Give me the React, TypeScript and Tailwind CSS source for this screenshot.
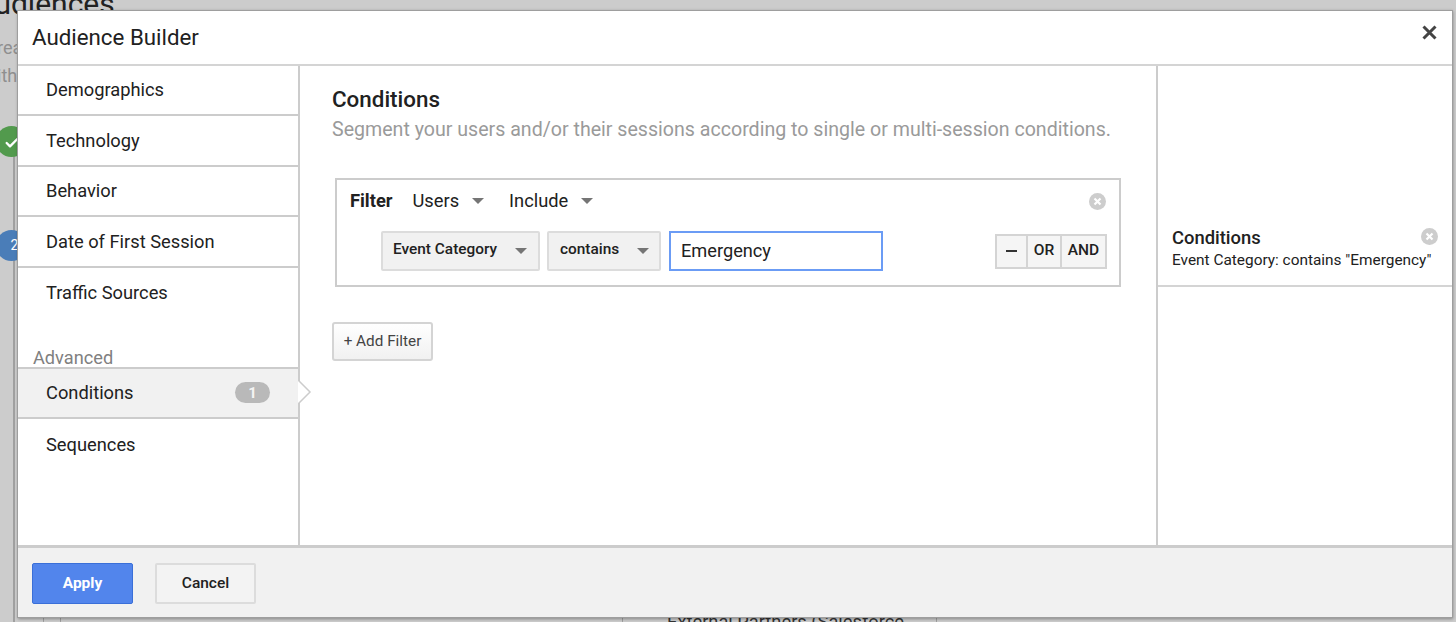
import React from 'react';
import { Check } from 'lucide-react';

const navItems = ['Demographics', 'Technology', 'Behavior', 'Date of First Session', 'Traffic Sources'];

const Caret = () => (
  <svg width="12" height="6" viewBox="0 0 12 6" className="shrink-0">
    <path d="M0 0h12L6 6z" fill="#757575" />
  </svg>
);

const CircleX = () => (
  <svg width="17" height="17" viewBox="0 0 17 17" className="shrink-0">
    <circle cx="8.5" cy="8.5" r="8.5" fill="#cdcdcd" />
    <path d="M5.5 5.5l6 6M11.5 5.5l-6 6" stroke="#fff" strokeWidth="2.2" />
  </svg>
);

// greyed page that shows around the dialog
const Backdrop = () => (
  <div className="absolute inset-0 overflow-hidden bg-[#cccccc] text-[#8f8f8f]">
    <div className="absolute left-[-25px] top-[-14px] text-[30px] leading-[36px] text-[#222222]">Audiences</div>
    <div className="absolute left-[-3px] top-[38px] text-[18px] leading-[20px]">rea</div>
    <div className="absolute left-[-3px] top-[66px] text-[18px] leading-[20px]">ith</div>
    <div className="absolute left-[13px] top-[150px] h-[472px] w-[2px] bg-[#a0a0a0]" />
    <div className="absolute left-[43px] top-[618px] h-[4px] w-[1px] bg-[#a0a0a0]" />
    <div className="absolute left-[60px] top-[618px] h-[4px] w-[1px] bg-[#a0a0a0]" />
    <div className="absolute left-[622px] top-[618px] h-[4px] w-[1px] bg-[#a0a0a0]" />
    <div className="absolute left-[936px] top-[618px] h-[4px] w-[1px] bg-[#a0a0a0]" />
    <div className="absolute left-[-4px] top-[126px] flex h-[31px] w-[31px] items-center justify-center rounded-full bg-[#529a4d]">
      <Check size={16} strokeWidth={3.5} color="#fff" className="mt-[3px]" />
    </div>
    <div className="absolute left-[-4px] top-[230px] flex h-[31px] w-[31px] items-center justify-center rounded-full bg-[#4a7db8] pl-[6px] text-[14px] text-white">2</div>
    <div className="absolute left-[667px] top-[612px] text-[18.3px] leading-[20px] text-[#333333]">External Partners (Salesforce</div>
  </div>
);

export default function App() {
  return (
    <div className="relative h-[622px] w-[1456px] overflow-hidden font-['Roboto',sans-serif] text-[#212121]">
      <Backdrop />
      <div className="relative ml-[18px] flex h-[619px] w-[1435px] flex-col pt-[10px]">
        <div className="flex h-[608px] flex-col border-t border-r border-b border-l-0 border-[#9e9e9e] bg-white shadow-[-1px_0_0_#9e9e9e,0_1px_3px_rgba(0,0,0,0.35)]">
          <div className="flex h-[55px] shrink-0 items-center justify-between border-b-2 border-[#d4d4d4] pl-[14px] pr-[15px]">
            <span className="mb-[1px] text-[22.3px] leading-[28px]">Audience Builder</span>
            <svg width="15" height="15" viewBox="0 0 15 15" className="mb-[10px]">
              <path d="M1.5 1.5l12 12M13.5 1.5l-12 12" stroke="#444444" strokeWidth="3" />
            </svg>
          </div>

          <div className="flex min-h-0 flex-1">
            <div className="flex w-[282px] shrink-0 flex-col border-r-2 border-[#cccccc]">
              {navItems.map((item, i) => (
                <div
                  key={item}
                  className={`flex h-[50.4px] shrink-0 items-center pl-[28px] text-[18.3px] ${i < 4 ? 'border-b-2 border-[#cccccc]' : ''}`}
                >
                  {item}
                </div>
              ))}
              <div className="mt-[29px] h-[20px] pl-[15px] text-[18.2px] leading-[22px] text-[#808080]">Advanced</div>
              <div className="relative flex h-[52px] shrink-0 items-center justify-between border-y-2 border-[#cccccc] bg-[#f1f1f1] pl-[28px] pr-[28px] text-[18.3px]">
                Conditions
                <span className="flex h-[21px] w-[35px] items-center justify-center rounded-full bg-[#b9b9b9] text-[15px] font-bold text-[#f4f4f4]">1</span>
                <svg width="14" height="24" viewBox="0 0 14 24" className="absolute left-[280px] top-[11px]">
                  <path d="M0 0l12 12L0 24" fill="#fff" stroke="#cccccc" strokeWidth="1.5" />
                </svg>
              </div>
              <div className="flex h-[51px] shrink-0 items-center pl-[28px] text-[18.3px]">Sequences</div>
            </div>

            <div className="flex-1 pl-[32px] pr-[34px] pt-[20px]">
              <div className="text-[22.4px] font-medium leading-[26px]">Conditions</div>
              <div className="mt-[6px] whitespace-nowrap text-[19.6px] leading-[24px] text-[#9a9a9a]">
                Segment your users and/or their sessions according to single or multi-session conditions.
              </div>
              <div className="ml-[3px] mt-[36px] h-[109px] w-[786px] border-2 border-[#cccccc] pl-[14px] pr-[12px] pt-[9px]">
                <div className="flex h-[24px] items-center text-[18.3px]">
                  <span className="-ml-[1px] font-bold">Filter</span>
                  <span className="ml-[20px]">Users</span>
                  <span className="ml-[13px]"><Caret /></span>
                  <span className="ml-[25px]">Include</span>
                  <span className="ml-[13px]"><Caret /></span>
                  <span className="ml-auto mr-[1px]"><CircleX /></span>
                </div>
                <div className="mt-[18px] flex h-[40px] items-center pl-[30px]">
                  <div className="flex h-[40px] w-[159px] items-center justify-between rounded-[2px] border-2 border-[#dcdcdc] bg-[#f1f1f1] pl-[10px] pr-[11px] text-[15.4px] font-medium">
                    <span className="mb-[3px]">Event Category</span>
                    <Caret />
                  </div>
                  <div className="ml-[7px] flex h-[40px] w-[114px] items-center justify-between rounded-[2px] border-2 border-[#dcdcdc] bg-[#f1f1f1] pl-[11px] pr-[10px] text-[15.4px] font-medium">
                    <span className="mb-[3px]">contains</span>
                    <Caret />
                  </div>
                  <div className="ml-[8px] flex h-[40px] w-[214px] items-center border-2 border-[#6b9cf5] pl-[10px] text-[18.2px]">Emergency</div>
                  <div className="ml-auto flex h-[35px] items-stretch border-2 border-[#d4d4d4] bg-[#f5f5f5] text-[15.5px] font-medium">
                    <div className="flex w-[31px] items-center justify-center border-r-2 border-[#d4d4d4]">
                      <span className="h-[2px] w-[11px] bg-[#333333]" />
                    </div>
                    <div className="flex w-[34px] items-center justify-center border-r-2 border-[#d4d4d4]">OR</div>
                    <div className="flex w-[43px] items-center justify-center">AND</div>
                  </div>
                </div>
              </div>
              <div className="mt-[35px] flex h-[39px] w-[101px] items-center justify-center rounded-[3px] border-2 border-[#d4d4d4] bg-gradient-to-b from-white to-[#f1f1f1] text-[15.3px] text-[#444444]">
                + Add Filter
              </div>
            </div>

            <div className="flex w-[296px] shrink-0 flex-col border-l-2 border-[#cccccc]">
              <div className="mt-[151px] flex h-[70px] flex-col justify-start border-t-0 border-b-2 border-[#d4d4d4] pl-[14px] pr-[14px] pt-[9px]">
                <div className="flex items-center justify-between">
                  <span className="text-[18.4px] font-medium leading-[24px]">Conditions</span>
                  <span className="-mt-[4px]"><CircleX /></span>
                </div>
                <div className="mt-[0px] whitespace-nowrap text-[15.4px] leading-[20px]">Event Category: contains "Emergency"</div>
              </div>
            </div>
          </div>

          <div className="flex h-[72px] shrink-0 items-center border-t-[3px] border-[#cccccc] bg-[#f1f1f1] pl-[14px] pt-[2px]">
            <button className="h-[41px] w-[101px] rounded-[2px] border border-[#3a6fd8] bg-[#5285ec] text-[15.5px] font-bold text-white">Apply</button>
            <button className="ml-[22px] h-[41px] w-[101px] rounded-[2px] border-2 border-[#dcdcdc] bg-[#f3f3f3] text-[15.5px] font-medium">Cancel</button>
          </div>
        </div>
      </div>
    </div>
  );
}
